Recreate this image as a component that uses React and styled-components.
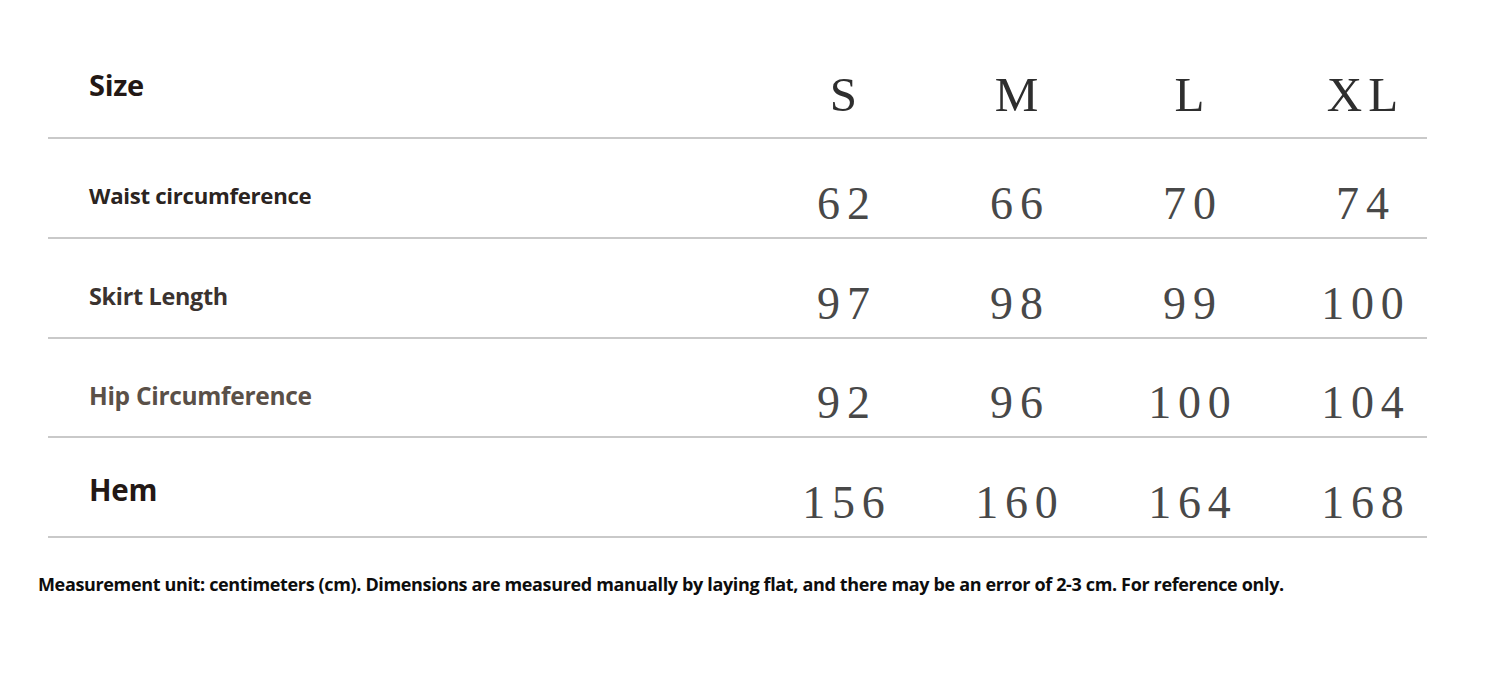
import styled, { createGlobalStyle } from 'styled-components';

const GlobalStyle = createGlobalStyle`
  html, body {
    margin: 0;
    padding: 0;
    background: #ffffff;
  }
  body {
    font-family: 'Open Sans', 'Noto Sans', sans-serif;
  }
`;

const sizes = ['S', 'M', 'L', 'XL'];

// label size differs per row in the original artwork
const rows = [
  { label: 'Waist circumference', color: '#2b2421', size: 22.2, values: ['62', '66', '70', '74'] },
  { label: 'Skirt Length', color: '#3b3330', size: 23.4, values: ['97', '98', '99', '100'] },
  { label: 'Hip Circumference', color: '#5a5048', size: 24.5, values: ['92', '96', '100', '104'] },
  { label: 'Hem', color: '#231815', size: 29.5, values: ['156', '160', '164', '168'], big: true },
];

const Page = styled.div`
  width: 1500px;
  height: 685px;
  padding: 47px 0 0 38px;
  box-sizing: border-box;
  display: flex;
  flex-direction: column;
`;

const Table = styled.div`
  width: 1401px;
  margin-left: 10px;
  display: flex;
  flex-direction: column;
`;

const Row = styled.div`
  height: ${(p) => p.$height}px;
  display: grid;
  grid-template-columns: 709px repeat(4, 173px);
  align-items: center;
`;

const Divider = styled.div`
  height: 2px;
  margin-right: 22px;
  background: #c9c9c9;
`;

const Label = styled.div`
  padding-left: 41px;
  padding-top: ${(p) => (p.$big ? 4 : 16)}px;
  padding-bottom: ${(p) => (p.$head ? 20 : 0)}px;
  font-size: ${(p) => p.$size}px;
  font-weight: 700;
  color: ${(p) => p.$color};
  letter-spacing: -0.3px;
  white-space: nowrap;
`;

const SizeHead = styled.div`
  text-align: center;
  padding-top: 4px;
  font-family: 'Liberation Serif', 'Times New Roman', serif;
  font-size: 49px;
  color: #2e2e2e;
  letter-spacing: ${(p) => (p.$wide ? 6 : 0)}px;
  padding-left: ${(p) => (p.$wide ? 6 : 0)}px;
`;

const Value = styled.div`
  text-align: center;
  padding-top: 32px;
  font-family: 'Liberation Serif', 'Times New Roman', serif;
  font-size: 46px;
  line-height: 1;
  color: #484848;
  letter-spacing: 6.8px;
  padding-left: 6.8px;
`;

const Note = styled.div`
  margin-top: 34px;
  font-size: 18px;
  font-weight: 700;
  color: #0d0d0d;
  letter-spacing: -0.35px;
  white-space: nowrap;
`;

export default function App() {
  return (
    <>
      <GlobalStyle />
      <Page>
        <Table>
          <Row $height={90}>
            <Label $big $head $size={29} $color="#231815">Size</Label>
            {sizes.map((s) => (
              <SizeHead key={s} $wide={s === 'XL'}>{s}</SizeHead>
            ))}
          </Row>
          <Divider />
          {rows.map((r) => (
            <div key={r.label}>
              <Row $height={97.75}>
                <Label $big={r.big} $size={r.size} $color={r.color}>{r.label}</Label>
                {r.values.map((v, i) => (
                  <Value key={i}>{v}</Value>
                ))}
              </Row>
              <Divider />
            </div>
          ))}
        </Table>
        <Note>
          Measurement unit: centimeters (cm). Dimensions are measured manually by laying flat, and there may be an error of 2-3 cm. For reference only.
        </Note>
      </Page>
    </>
  );
}
